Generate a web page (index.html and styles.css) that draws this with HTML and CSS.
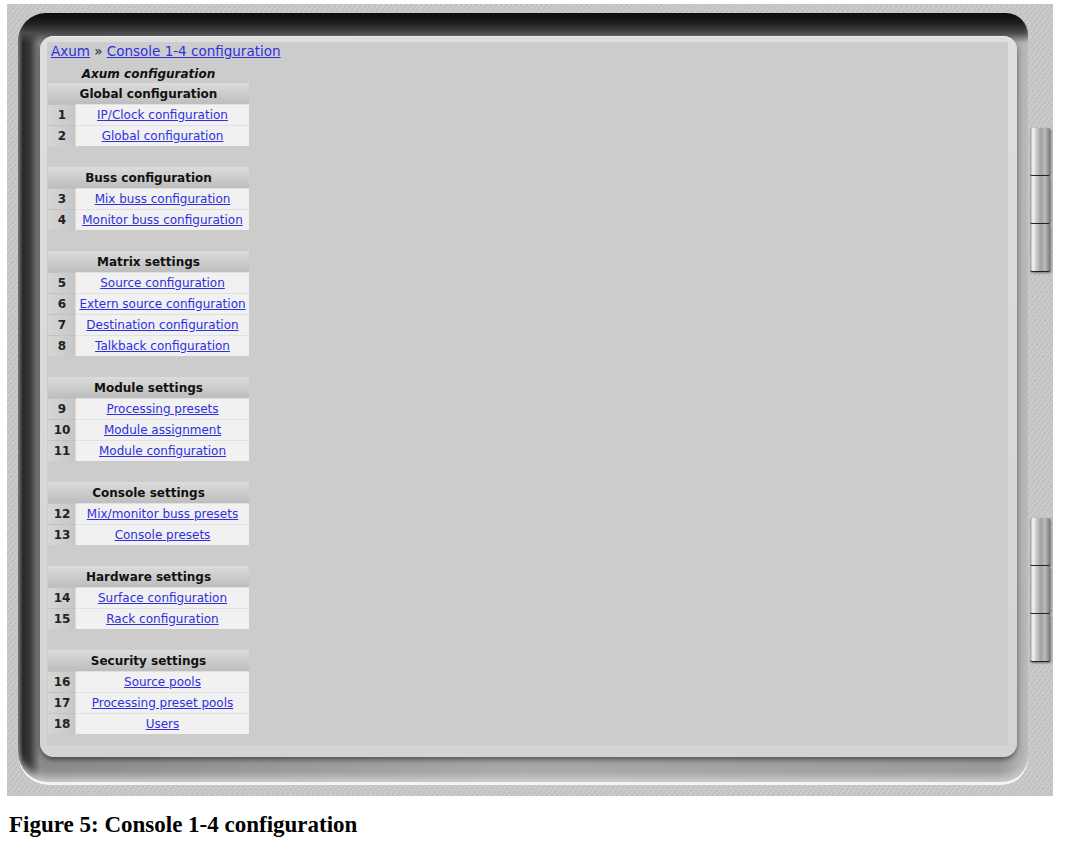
FILE: index.html
```html
<!DOCTYPE html>
<html lang="en">
  <head>
    <meta charset="UTF-8" />
    <title>Console 1-4 configuration</title>
    <link rel="stylesheet" href="styles.css">
  </head>
  <body>
    <div class="frame">
      <div class="recess">
        <div class="bezel">
          <div class="content">
            <div class="crumbs"><a href="#">Axum</a> &raquo; <a href="#">Console 1-4 configuration</a></div>
            <div class="menu-title">Axum configuration</div>
            <table class="menu">
              <tr><th colspan="2">Global configuration</th></tr>
              <tr><td class="num">1</td><td class="link"><a href="#">IP/Clock configuration</a></td></tr>
              <tr><td class="num">2</td><td class="link"><a href="#">Global configuration</a></td></tr>
              <tr class="blank"><td colspan="2"></td></tr>

              <tr><th colspan="2">Buss configuration</th></tr>
              <tr><td class="num">3</td><td class="link"><a href="#">Mix buss configuration</a></td></tr>
              <tr><td class="num">4</td><td class="link"><a href="#">Monitor buss configuration</a></td></tr>
              <tr class="blank"><td colspan="2"></td></tr>

              <tr><th colspan="2">Matrix settings</th></tr>
              <tr><td class="num">5</td><td class="link"><a href="#">Source configuration</a></td></tr>
              <tr><td class="num">6</td><td class="link"><a href="#">Extern source configuration</a></td></tr>
              <tr><td class="num">7</td><td class="link"><a href="#">Destination configuration</a></td></tr>
              <tr><td class="num">8</td><td class="link"><a href="#">Talkback configuration</a></td></tr>
              <tr class="blank"><td colspan="2"></td></tr>

              <tr><th colspan="2">Module settings</th></tr>
              <tr><td class="num">9</td><td class="link"><a href="#">Processing presets</a></td></tr>
              <tr><td class="num">10</td><td class="link"><a href="#">Module assignment</a></td></tr>
              <tr><td class="num">11</td><td class="link"><a href="#">Module configuration</a></td></tr>
              <tr class="blank"><td colspan="2"></td></tr>

              <tr><th colspan="2">Console settings</th></tr>
              <tr><td class="num">12</td><td class="link"><a href="#">Mix/monitor buss presets</a></td></tr>
              <tr><td class="num">13</td><td class="link"><a href="#">Console presets</a></td></tr>
              <tr class="blank"><td colspan="2"></td></tr>

              <tr><th colspan="2">Hardware settings</th></tr>
              <tr><td class="num">14</td><td class="link"><a href="#">Surface configuration</a></td></tr>
              <tr><td class="num">15</td><td class="link"><a href="#">Rack configuration</a></td></tr>
              <tr class="blank"><td colspan="2"></td></tr>

              <tr><th colspan="2">Security settings</th></tr>
              <tr><td class="num">16</td><td class="link"><a href="#">Source pools</a></td></tr>
              <tr><td class="num">17</td><td class="link"><a href="#">Processing preset pools</a></td></tr>
              <tr><td class="num">18</td><td class="link"><a href="#">Users</a></td></tr>
            </table>
          </div>
        </div>
      </div>
      <div class="hinge hinge-top">
        <div class="knuckle"></div>
        <div class="knuckle"></div>
        <div class="knuckle"></div>
      </div>
      <div class="hinge hinge-bottom">
        <div class="knuckle"></div>
        <div class="knuckle"></div>
        <div class="knuckle"></div>
      </div>
    </div>
    <p class="caption">Figure 5: Console 1-4 configuration</p>
  </body>
</html>
```

FILE: styles.css
```css
body {
  margin: 0;
  background: #fff;
  font-family: "DejaVu Sans", Verdana, sans-serif;
}

.frame {
  position: relative;
  width: 1046px;
  height: 792px;
  margin: 4px 0 0 7px;
  padding: 9px 0 0 11px;
  box-sizing: border-box;
  background-color: #c7c7c7;
  background-image:
    repeating-linear-gradient(37deg, rgba(255, 255, 255, 0.12) 0 1px, transparent 1px 3px),
    repeating-linear-gradient(-53deg, rgba(0, 0, 0, 0.06) 0 1px, transparent 1px 4px);
}

.recess {
  width: 1010px;
  height: 772px;
  padding: 23px 0 0 22px;
  box-sizing: border-box;
  border-radius: 28px 22px 26px 30px;
  background:
    linear-gradient(to bottom, #0c0c0c 0, #1e1e1e 10px, #4a4a4a 20px, rgba(90, 90, 90, 0) 30px),
    linear-gradient(to right, #6a6a6a 0, #262626 5px, #3a3a3a 12px, #8a8a8a 22px, #a8a8a8 50%, #9a9a9a 97%, #b8b8b8 100%);
  box-shadow: inset 0 -3px 0 #f4f4f4, inset 0 -12px 8px -4px #cfcfcf;
}

.bezel {
  width: 977px;
  height: 721px;
  padding: 6px 0 0 7px;
  box-sizing: border-box;
  background: linear-gradient(to bottom, #dedede, #d4d4d4);
  border-radius: 14px;
  box-shadow: 0 3px 5px rgba(0, 0, 0, 0.45), inset 0 1px 0 #ececec;
}

.content {
  width: 961px;
  height: 703px;
  padding: 1px 0 0 1px;
  box-sizing: border-box;
  background: #cccccc;
}

.crumbs {
  font-size: 13.5px;
  line-height: 16px;
  padding-left: 3px;
  color: #222;
}

a {
  color: #2f2fe0;
}

.menu-title {
  width: 201px;
  margin-top: 6px;
  font-size: 12px;
  line-height: 18px;
  font-weight: bold;
  font-style: italic;
  text-align: center;
  color: #111;
}

.menu {
  width: 201px;
  border-collapse: collapse;
  font-size: 12px;
}

.menu th {
  height: 21px;
  padding: 0;
  font-weight: bold;
  color: #111;
  background: linear-gradient(to bottom, #dcdcdc, #bdbdbd);
}

.menu td {
  height: 21px;
  padding: 0;
}

.menu .num {
  width: 28px;
  text-align: center;
  font-weight: bold;
  color: #222;
  background: linear-gradient(to right, #d6d6d6, #c6c6c6);
  box-shadow: inset 0 1px 0 #c2c2c2, inset -1px 0 0 #dadada;
}

.menu .link {
  text-align: center;
  background: #f1f1f1;
  box-shadow: inset 0 1px 0 #e0e0e0;
}

.menu .blank td {
  background: transparent;
}

.hinge {
  position: absolute;
  left: 1023px;
  width: 20px;
  filter: drop-shadow(1px 1px 1px rgba(0, 0, 0, 0.45));
}

.hinge-top {
  top: 124px;
}

.hinge-bottom {
  top: 514px;
}

.knuckle {
  height: 47px;
  border-bottom: 1px solid #222;
  border-radius: 2px;
  background: linear-gradient(to right, #9a9a9a 0, #f6f6f6 15%, #cfcfcf 30%, #a0a0a0 55%, #bdbdbd 75%, #7a7a7a 100%);
}

.caption {
  margin: 16px 0 0 9px;
  font-family: "Liberation Serif", "Times New Roman", serif;
  font-size: 23px;
  line-height: 26px;
  font-weight: bold;
  color: #000;
}
```
